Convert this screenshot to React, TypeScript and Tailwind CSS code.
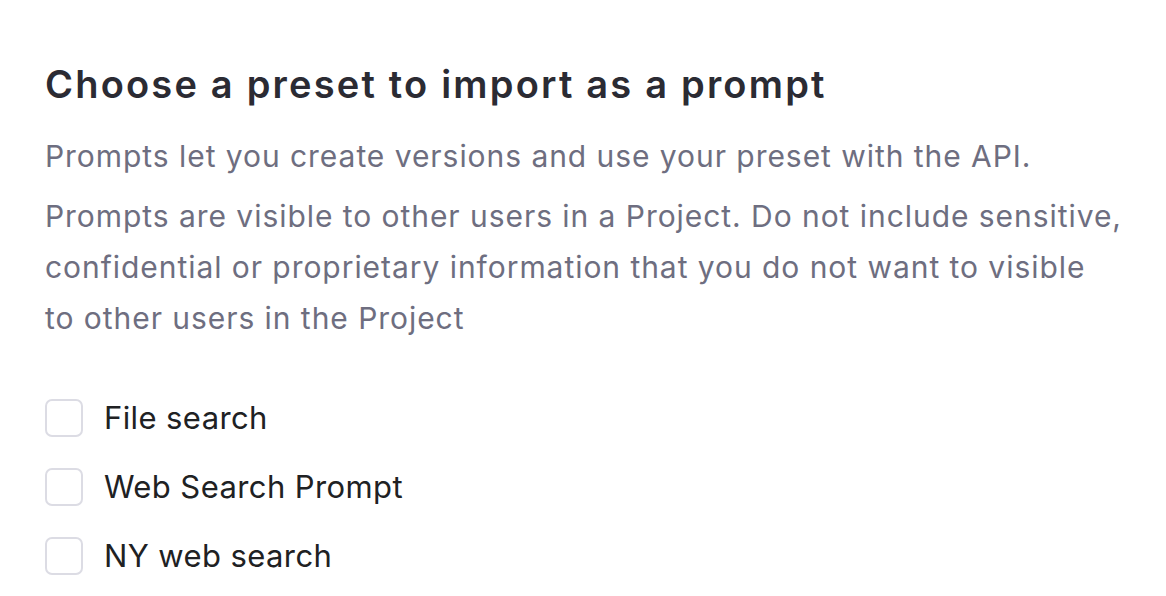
const PRESETS = ["File search", "Web Search Prompt", "NY web search"];

export default function App() {
  return (
    <div
      className="min-h-screen bg-white pl-[45px] pr-[20px] pt-[58px] text-[#202123]"
      style={{ fontFamily: "Inter, 'Noto Sans', sans-serif" }}
    >
      <h1 className="text-[38px] font-semibold leading-[52px] tracking-[2.2px] text-[#2b2b33]">
        Choose a preset to import as a prompt
      </h1>
      <p className="mt-[20px] text-[30px] leading-[52px] tracking-[0.95px] text-[#6e6e80]">
        Prompts let you create versions and use your preset with the API.
      </p>
      <p className="mt-[9px] text-[30px] leading-[51px] tracking-[0.95px] text-[#6e6e80]">
        Prompts are visible to other users in a Project. Do not include
        sensitive,
        <br />
        confidential or proprietary information that you do not want to visible
        <br />
        to other users in the Project
      </p>

      <div className="mt-[55px] flex flex-col gap-[31px]">
        {PRESETS.map((name) => (
          <label key={name} className="flex items-center gap-[21px]">
            <span className="h-[38px] w-[38px] shrink-0 rounded-[7px] border-2 border-[#dcdce4] bg-white" />
            <span className="text-[31px] leading-[38px] tracking-[0.4px] text-[#202123]">
              {name}
            </span>
          </label>
        ))}
      </div>
    </div>
  );
}
